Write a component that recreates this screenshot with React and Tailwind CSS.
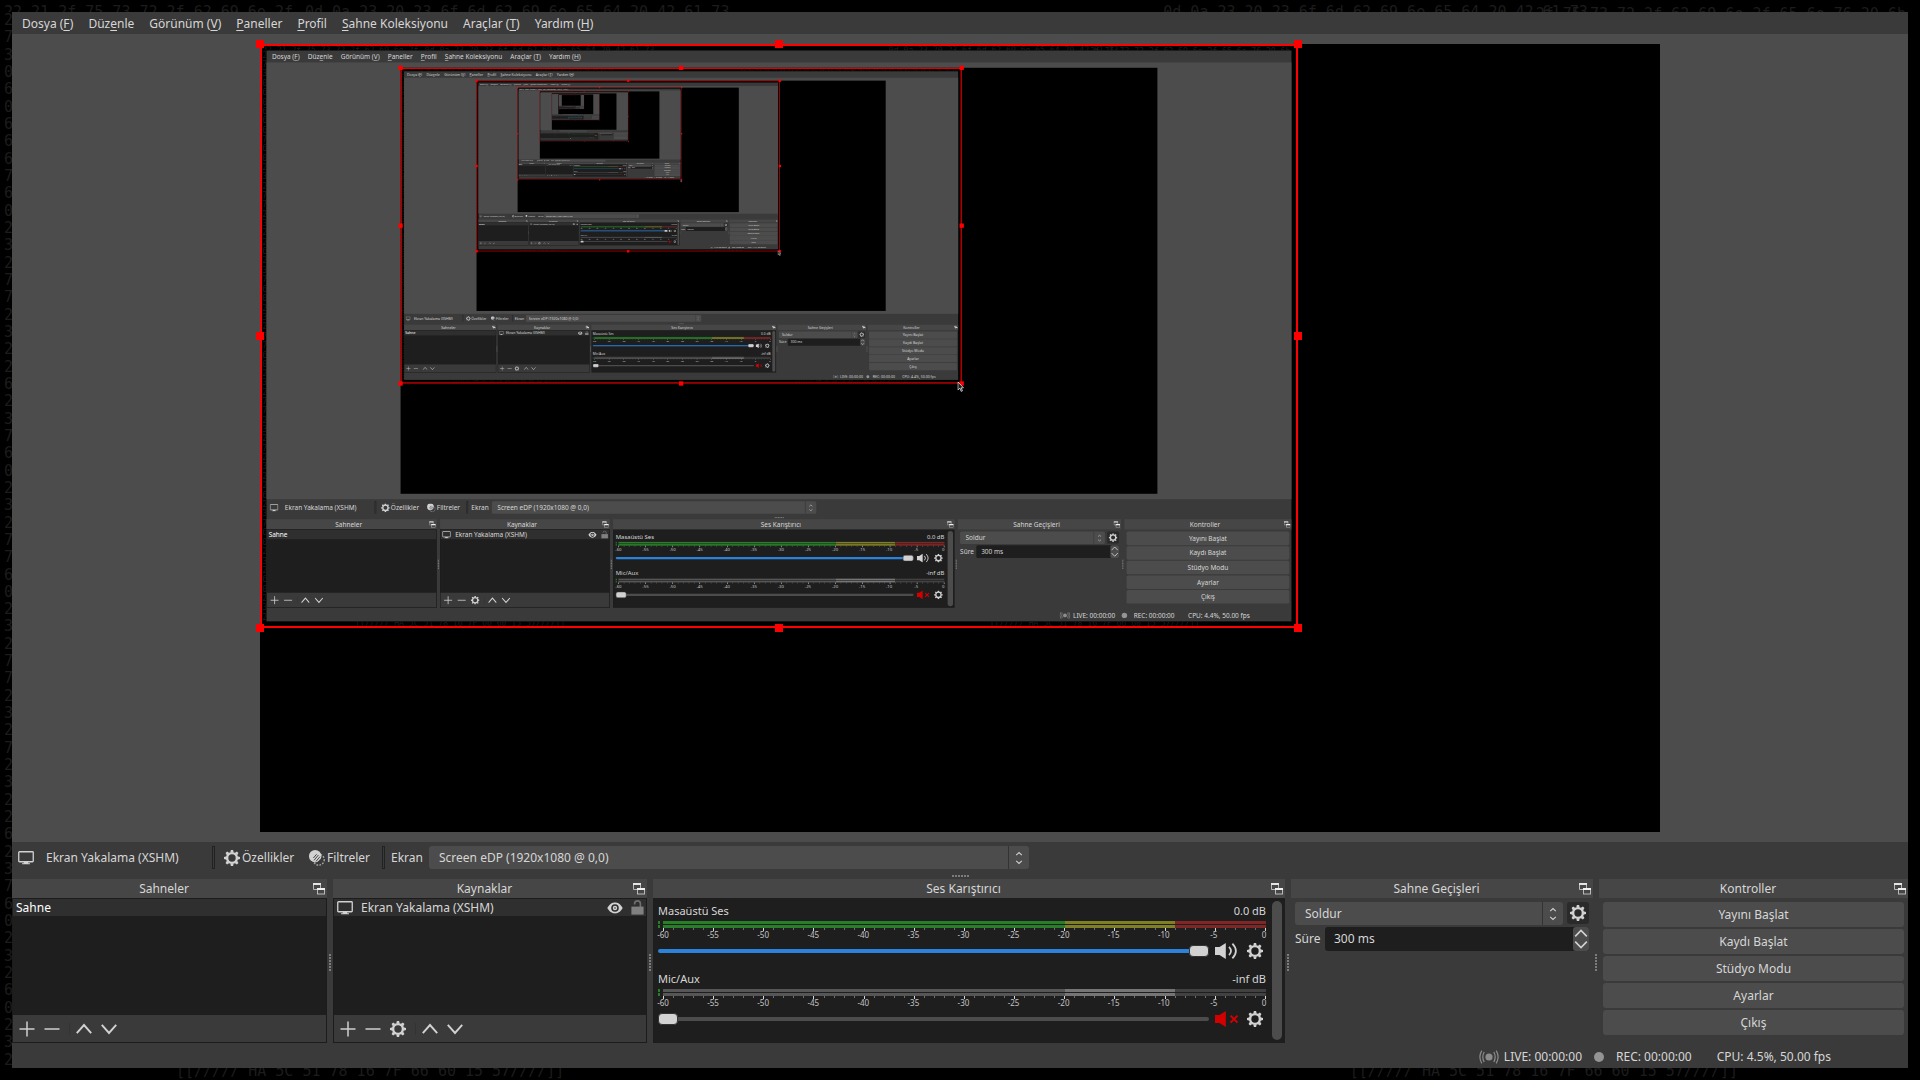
import { useState } from "react";

const MAX_DEPTH = 7;

const LEFT_DIGITS = "2730606667602327723226237602327760232772327232262376023260232".split("");
const HEX_A = "22 21 2f 75 73 72 2f 62 69 6e 2f";
const HEX_B = "0d 0a 23 20 23 6f 6d 62 69 6e 65 64 20 42 61 73";
const HEX_C = "2f 75 73 72 2f 62 69 6e 2f 65 6e 76 20 6b";
const HEX_D = "[[/////'HA 5C 51 78 16 7F 66 60 15 57////]]";

const MENUS = [
  ["Dosya (", "F", ")"],
  ["Düz", "e", "nle"],
  ["Görünüm (", "V", ")"],
  ["", "P", "aneller"],
  ["", "P", "rofil"],
  ["", "S", "ahne Koleksiyonu"],
  ["Araçlar (", "T", ")"],
  ["Yardım (", "H", ")"],
];

function GearIcon() {
  return (
    <svg viewBox="0 0 16 16" className="size-4 shrink-0" aria-hidden="true">
      <circle cx="8" cy="8" r="4.9" fill="none" stroke="#d2d2d2" strokeWidth="2.4" />
      {[0, 45, 90, 135, 180, 225, 270, 315].map((a) => (
        <path key={a} d="M6.3 2.6 L6.9 0 H9.1 L9.7 2.6 Z" fill="#d2d2d2" transform={`rotate(${a} 8 8)`} />
      ))}
    </svg>
  );
}

function MonitorIcon() {
  return (
    <svg viewBox="0 0 16 14" className="h-3.5 w-4 shrink-0" aria-hidden="true">
      <rect x="0.75" y="0.75" width="14.5" height="10" rx="0.8" fill="none" stroke="#d2d2d2" strokeWidth="1.3" />
      <path d="M6 11 H10 L10.4 12.2 H12 V13.3 H4 V12.2 H5.6 Z" fill="#d2d2d2" />
    </svg>
  );
}

function FilterIcon() {
  return (
    <svg viewBox="0 0 16 16" className="size-4 shrink-0" aria-hidden="true">
      <circle cx="9.7" cy="9.7" r="5.5" fill="none" stroke="#a9a9a9" strokeWidth="1.4" strokeDasharray="1.7 1.3" />
      <circle cx="6.2" cy="6.2" r="6.2" fill="#d2d2d2" />
      <path d="M5 10.4 L9.4 5 M7 11.4 L11 6.6 M4.4 8 L7.6 4.2 M9 12.2 L12 8.6" stroke="#3a3a3a" strokeWidth="0.9" fill="none" />
    </svg>
  );
}

function FloatIcon() {
  return (
    <svg viewBox="0 0 12 12" className="size-3" aria-hidden="true">
      <path d="M0.5 0.5 H7.5 V5 M0.5 0.5 V6.5 H4" fill="none" stroke="#b9b9b9" />
      <path d="M0 0 H8 V2 H0 Z" fill="#e4e4e4" />
      <rect x="4.5" y="5.5" width="7" height="5.5" fill="#464646" stroke="#b9b9b9" />
      <path d="M4 5 H12 V7 H4 Z" fill="#f0f0f0" />
    </svg>
  );
}

function PlusIcon() {
  return (
    <svg viewBox="0 0 16 16" className="size-4" aria-hidden="true">
      <path d="M8 0.5 V15.5 M0.5 8 H15.5" stroke="#cfcfcf" strokeWidth="1.5" />
    </svg>
  );
}

function MinusIcon() {
  return (
    <svg viewBox="0 0 16 16" className="size-4" aria-hidden="true">
      <path d="M0.5 8 H15.5" stroke="#cfcfcf" strokeWidth="1.5" />
    </svg>
  );
}

function ChevronIcon({ down }) {
  return (
    <svg viewBox="0 0 16 16" className="size-4" aria-hidden="true">
      <path d={down ? "M0.8 3.8 L8 12 L15.2 3.8" : "M0.8 12.2 L8 4 L15.2 12.2"} fill="none" stroke="#d2d2d2" strokeWidth="1.9" />
    </svg>
  );
}

function EyeIcon() {
  return (
    <svg viewBox="0 0 16 12" className="h-3 w-4" aria-hidden="true">
      <path d="M0.3 6 C3 1.6 5.4 0.6 8 0.6 C10.6 0.6 13 1.6 15.7 6 C13 10.4 10.6 11.4 8 11.4 C5.4 11.4 3 10.4 0.3 6 Z" fill="#d2d2d2" />
      <circle cx="8" cy="6" r="3.8" fill="#2f2f2f" />
      <circle cx="8" cy="6" r="2.2" fill="#d2d2d2" />
      <circle cx="8" cy="6" r="0.8" fill="#2f2f2f" />
    </svg>
  );
}

function LockIcon() {
  return (
    <svg viewBox="0 0 13 15" className="h-[15px] w-[13px]" aria-hidden="true">
      <path d="M3.6 4.4 V3.8 A2.9 2.9 0 0 1 9.4 3.8 V7" fill="none" stroke="#6e6e6e" strokeWidth="1.7" />
      <rect x="0.4" y="6.6" width="12.2" height="8" fill="#808080" />
    </svg>
  );
}

function SpeakerIcon({ muted }) {
  const color = muted ? "#d40000" : "#d2d2d2";
  return (
    <svg viewBox="0 0 23 16" className="h-4 w-[23px]" aria-hidden="true">
      <path d="M0 4 H4.5 L10.8 0 V16 L4.5 12 H0 Z" fill={color} />
      {muted ? (
        <path d="M15.5 4.6 L22.5 11.6 M22.5 4.6 L15.5 11.6" stroke={color} strokeWidth="2" />
      ) : (
        <path d="M14 3.8 Q18 8 14 12.2 M17.4 0.6 Q24.4 8 17.4 15.4" fill="none" stroke={color} strokeWidth="1.7" />
      )}
    </svg>
  );
}

function LiveIcon() {
  return (
    <svg viewBox="0 0 20 14" className="h-3.5 w-5" aria-hidden="true">
      <circle cx="10" cy="7" r="3.6" fill="#8c8c8c" />
      <path d="M5.2 2 Q2.4 7 5.2 12 M14.8 2 Q17.6 7 14.8 12 M2.8 0.6 Q-1 7 2.8 13.4 M17.2 0.6 Q21 7 17.2 13.4" fill="none" stroke="#8c8c8c" strokeWidth="1.2" />
    </svg>
  );
}

function ComboArrows() {
  return (
    <span className="pointer-events-none absolute inset-y-0 right-0 flex w-[21px] items-center justify-center border-l border-[#333333]">
      <svg viewBox="0 0 8 14" className="h-3.5 w-2" aria-hidden="true">
        <path d="M1.2 4.2 L4 1.6 L6.8 4.2 M1.2 9.8 L4 12.4 L6.8 9.8" fill="none" stroke="#d2d2d2" strokeWidth="1.1" />
      </svg>
    </span>
  );
}

function Combo({ label, value, className }) {
  return (
    <span className={`relative flex h-[23px] ${className}`}>
      <select
        aria-label={label}
        className="min-w-0 flex-1 appearance-none rounded-[3px] bg-[#4c4c4c] pr-6 pl-2.5 text-[#d6d6d6] outline-none"
      >
        <option>{value}</option>
      </select>
      <ComboArrows />
    </span>
  );
}

function SplitterColumn() {
  return (
    <div className="flex flex-col items-center gap-px pt-[75px]">
      {[0, 1, 2, 3, 4, 5].map((i) => (
        <span key={i} className="h-0.5 w-0.5 bg-[#7c7c7c]" />
      ))}
    </div>
  );
}

function Dock({ title, bodyClass, children }) {
  return (
    <section className="flex min-w-0 flex-col">
      <header className="flex h-[19px] items-center bg-[#464646] pr-0.5 pl-[3px]">
        <h2 className="flex-1 text-center">{title}</h2>
        <button type="button" aria-label="Paneli ayır" className="mt-px">
          <FloatIcon />
        </button>
      </header>
      <div className={`flex-1 ${bodyClass}`}>{children}</div>
    </section>
  );
}

function IconButton({ label, children }) {
  return (
    <button type="button" aria-label={label} className="flex shrink-0 items-center">
      {children}
    </button>
  );
}

function ListDock({ title, row, withGear }) {
  return (
    <Dock title={title} bodyClass="flex flex-col border border-[#1c1c1c] bg-[#1e1e1e]">
      <ul className="flex-1">{row}</ul>
      <div className="flex h-[27px] items-center gap-[9px] bg-[#3a3a3a] px-1.5">
        <IconButton label="Ekle"><PlusIcon /></IconButton>
        <IconButton label="Kaldır"><MinusIcon /></IconButton>
        {withGear && <IconButton label="Özellikler"><GearIcon /></IconButton>}
        <span className="-mr-[3px] h-3 w-px bg-[#333333]" />
        <IconButton label="Yukarı"><ChevronIcon /></IconButton>
        <IconButton label="Aşağı"><ChevronIcon down /></IconButton>
      </div>
    </Dock>
  );
}

function MeterBar({ muted }) {
  return (
    <div className="flex h-[3px] gap-[3px]">
      <span className="w-0.5 bg-[#287d28]" />
      <span className="flex flex-1">
        <span className={`flex-[402] ${muted ? "bg-[#565656]" : "bg-[#287d28]"}`} />
        <span className={`flex-[110] ${muted ? "bg-[#757575]" : "bg-[#7f7f26]"}`} />
        <span className={`flex-[91] ${muted ? "bg-[#414141]" : "bg-[#7f2626]"}`} />
      </span>
    </div>
  );
}

const TICKS = Array.from({ length: 61 }, (_, i) => i - 60);
const MARKS = [-60, -55, -50, -45, -40, -35, -30, -25, -20, -15, -10, -5, 0];

function Channel({ name, level, muted, initial }) {
  const [value, setValue] = useState(initial);
  return (
    <div className="flex flex-col pb-3">
      <div className="flex h-4 items-center justify-between text-[11px]">
        <span>{name}</span>
        <span>{level}</span>
      </div>
      <div className="mt-0.5 flex flex-col gap-px">
        <MeterBar muted={muted} />
        <MeterBar muted={muted} />
      </div>
      <div className="ml-[5px] flex h-[3px] items-start justify-between">
        {TICKS.map((t) => (
          <span key={t} className={t % 5 === 0 ? "h-[3px] w-px bg-[#d8d8d8]" : "h-0.5 w-px bg-[#6e6e6e]"} />
        ))}
      </div>
      <div className="mr-0.5 ml-[5px] flex h-2 items-center justify-between text-[8px] leading-none text-[#c4c4c4]">
        {MARKS.map((m) => (
          <span key={m} className="flex w-0 justify-center">{m}</span>
        ))}
      </div>
      <div className="mt-1 flex h-4 items-center pr-[3px]">
        <input
          type="range"
          min="0"
          max="100"
          aria-label={name}
          value={value}
          onChange={(e) => setValue(Number(e.target.value))}
          style={{
            background: `linear-gradient(to right, #2a82da ${value}%, #4c4c4c ${value}%)`,
          }}
          className="mr-1.5 h-1 min-w-0 flex-1 appearance-none rounded-full [&::-webkit-slider-thumb]:h-3 [&::-webkit-slider-thumb]:w-5 [&::-webkit-slider-thumb]:appearance-none [&::-webkit-slider-thumb]:rounded [&::-webkit-slider-thumb]:border [&::-webkit-slider-thumb]:border-[#333333] [&::-webkit-slider-thumb]:bg-[#d2d2d2]"
        />
        <IconButton label="Sesi kapat"><SpeakerIcon muted={muted} /></IconButton>
        <span className="w-[9px]" />
        <IconButton label="Ses ayarları"><GearIcon /></IconButton>
      </div>
    </div>
  );
}

function Handle({ className }) {
  return <span className={`absolute size-2 bg-[#ff0000] ${className}`} />;
}

function Preview({ depth }) {
  return (
    <div className="flex min-h-0 flex-1 justify-center bg-[#4c4c4c] py-2.5">
      <div className="aspect-video h-full min-w-0 bg-black">
        <div className="relative aspect-video w-[74.15%]">
          <div className="absolute inset-0 overflow-hidden">
            {depth < MAX_DEPTH && (
              <div className="h-screen w-screen origin-top-left scale-[0.5406]" aria-hidden="true" inert>
                <Screen depth={depth + 1} />
              </div>
            )}
          </div>
          <div className="absolute inset-0 border-2 border-[#ff0000]" />
          <Handle className="-top-1 -left-1" />
          <Handle className="-top-1 left-1/2 -translate-x-1/2" />
          <Handle className="-top-1 -right-1" />
          <Handle className="top-1/2 -left-1 -translate-y-1/2" />
          <Handle className="top-1/2 -right-1 -translate-y-1/2" />
          <Handle className="-bottom-1 -left-1" />
          <Handle className="-bottom-1 left-1/2 -translate-x-1/2" />
          <Handle className="-right-1 -bottom-1" />
          {depth > 0 && (
            <svg viewBox="0 0 12 20" className="absolute -right-1 -bottom-4 h-5 w-3" aria-hidden="true">
              <path d="M1 1 V16 L4.6 12.6 L7 18.6 L9.4 17.6 L7 12 H11.4 Z" fill="#1e1e1e" stroke="#f0f0f0" strokeWidth="1.4" />
            </svg>
          )}
        </div>
      </div>
    </div>
  );
}

function Separator() {
  return <span className="h-[23px] w-[3px] border border-[#222222]" />;
}

function SourceBar() {
  return (
    <div className="flex items-center pt-1 pl-1.5">
      <MonitorIcon />
      <span className="w-[166px] pl-3">Ekran Yakalama (XSHM)</span>
      <span className="ml-3" />
      <Separator />
      <button type="button" className="ml-[9px] flex w-[85px] items-center gap-0.5">
        <GearIcon />
        Özellikler
      </button>
      <button type="button" className="flex w-[73px] items-center gap-0.5">
        <FilterIcon />
        Filtreler
      </button>
      <Separator />
      <span className="w-11 pl-1.5">Ekran</span>
      <Combo label="Ekran" value="Screen eDP (1920x1080 @ 0,0)" className="w-[600px]" />
    </div>
  );
}

function TransitionsDock() {
  return (
    <Dock title="Sahne Geçişleri" bodyClass="flex flex-col gap-0.5 px-1 pt-1">
      <div className="flex gap-1">
        <Combo label="Sahne geçişi" value="Soldur" className="flex-1" />
        <button type="button" aria-label="Geçiş ayarları" className="flex h-[22px] w-[22px] items-center justify-center rounded-[3px] bg-[#2a2a2a]">
          <GearIcon />
        </button>
      </div>
      <label className="flex h-6 items-center">
        <span className="w-[30px] shrink-0">Süre</span>
        <span className="flex h-full min-w-0 flex-1 rounded-[3px] bg-[#1e1e1e]">
          <input type="text" defaultValue="300 ms" className="min-w-0 flex-1 bg-transparent pl-[9px] text-[#d6d6d6] outline-none" />
          <span className="flex w-4 items-center justify-center rounded-[3px] bg-[#4c4c4c]">
            <svg viewBox="0 0 14 20" className="h-5 w-3.5" aria-hidden="true">
              <path d="M1.2 7.4 L7 1.4 L12.8 7.4 M1.2 12.6 L7 18.6 L12.8 12.6" fill="none" stroke="#d2d2d2" strokeWidth="1.6" />
            </svg>
          </span>
        </span>
      </label>
    </Dock>
  );
}

function StatusBar({ cpu }) {
  return (
    <footer className="flex h-[25px] items-center justify-end pt-0.5 pr-[77px]">
      <LiveIcon />
      <span className="pl-[5px]">LIVE: 00:00:00</span>
      <span className="mx-3 size-2.5 rounded-full bg-[#949494]" />
      <span>REC: 00:00:00</span>
      <span className="pl-[25px]">CPU: {cpu}%, 50.00 fps</span>
    </footer>
  );
}

function ObsWindow({ depth }) {
  return (
    <main className="flex min-w-0 flex-1 flex-col bg-[#3a3a3a]">
      <nav className="flex h-[22px] shrink-0 items-center gap-[15px] pt-0.5 pl-2.5">
        {MENUS.map(([before, key, after]) => (
          <button type="button" key={before + key + after} className="whitespace-pre">
            {before}
            <span className="underline underline-offset-2">{key}</span>
            {after}
          </button>
        ))}
      </nav>
      <Preview depth={depth} />
      <SourceBar />
      <div className="flex h-2.5 items-center justify-center gap-px pt-1">
        {[0, 1, 2, 3, 4, 5].map((i) => (
          <span key={i} className="h-0.5 w-0.5 bg-[#7c7c7c]" />
        ))}
      </div>
      <div className="grid shrink-0 grid-cols-[minmax(0,315fr)_6px_minmax(0,314fr)_6px_minmax(0,632fr)_6px_minmax(0,302fr)_6px_minmax(0,309fr)]">
        <ListDock
          title="Sahneler"
          row={<li className="flex h-[17px] items-center bg-[#2f2f2f] pl-[3px] text-white">Sahne</li>}
        />
        <SplitterColumn />
        <ListDock
          title="Kaynaklar"
          withGear
          row={
            <li className="flex h-[17px] items-center bg-[#2f2f2f] pr-0.5 pl-[3px]">
              <MonitorIcon />
              <span className="flex-1 pl-2">Ekran Yakalama (XSHM)</span>
              <IconButton label="Görünürlük"><EyeIcon /></IconButton>
              <span className="w-2" />
              <IconButton label="Kilitle"><LockIcon /></IconButton>
            </li>
          }
        />
        <SplitterColumn />
        <Dock title="Ses Karıştırıcı" bodyClass="flex gap-1.5 bg-[#1e1e1e] pr-[3px] pl-[5px]">
          <div className="min-w-0 flex-1 pt-[5px]">
            <Channel name="Masaüstü Ses" level="0.0 dB" initial={100} />
            <Channel name="Mic/Aux" level="-inf dB" muted initial={0} />
          </div>
          <div className="my-[3px] w-2.5 rounded-full bg-[#4c4c4c]" />
        </Dock>
        <SplitterColumn />
        <TransitionsDock />
        <SplitterColumn />
        <Dock title="Kontroller" bodyClass="flex flex-col gap-0.5 px-1 pt-1 pb-2">
          {["Yayını Başlat", "Kaydı Başlat", "Stüdyo Modu", "Ayarlar", "Çıkış"].map((t) => (
            <button type="button" key={t} className="h-[25px] rounded-[3px] bg-[#4c4c4c]">
              {t}
            </button>
          ))}
        </Dock>
      </div>
      <StatusBar cpu={depth === 0 ? "4.5" : "4.4"} />
    </main>
  );
}

function Screen({ depth }) {
  return (
    <div className="flex h-full w-full flex-col overflow-hidden bg-black font-['Noto_Sans',sans-serif] text-[12px] leading-4 text-[#d6d6d6]">
      <div className="flex h-3 shrink-0 justify-between overflow-hidden pt-1 pr-3.5 pl-1 font-['DejaVu_Sans_Mono',monospace] text-[15px] whitespace-pre text-[#1c1c1c]" aria-hidden="true">
        <span className="flex gap-3">
          <span>{HEX_A}</span>
          <span>{HEX_B}</span>
        </span>
        <span className="flex">
          <span className="-mr-[52px]">{HEX_B}</span>
          <span className="pt-0.5">{HEX_C}</span>
        </span>
      </div>
      <div className="flex min-h-0 flex-1">
        <div className="flex w-3 shrink-0 flex-col justify-between overflow-hidden pl-1 font-['DejaVu_Sans_Mono',monospace] text-[15px] leading-4 text-[#1c1c1c]" aria-hidden="true">
          {LEFT_DIGITS.map((d, i) => (
            <span key={i}>{d}</span>
          ))}
        </div>
        <ObsWindow depth={depth} />
        <div className="w-3 shrink-0" />
      </div>
      <div className="flex h-3 shrink-0 justify-between overflow-hidden pr-[182px] pl-44 font-['DejaVu_Sans_Mono',monospace] text-[15px] leading-[6px] whitespace-pre text-[#1c1c1c]" aria-hidden="true">
        <span>{HEX_D}</span>
        <span>{HEX_D}</span>
      </div>
    </div>
  );
}

export default function App() {
  return (
    <div className="h-screen w-full">
      <Screen depth={0} />
    </div>
  );
}
